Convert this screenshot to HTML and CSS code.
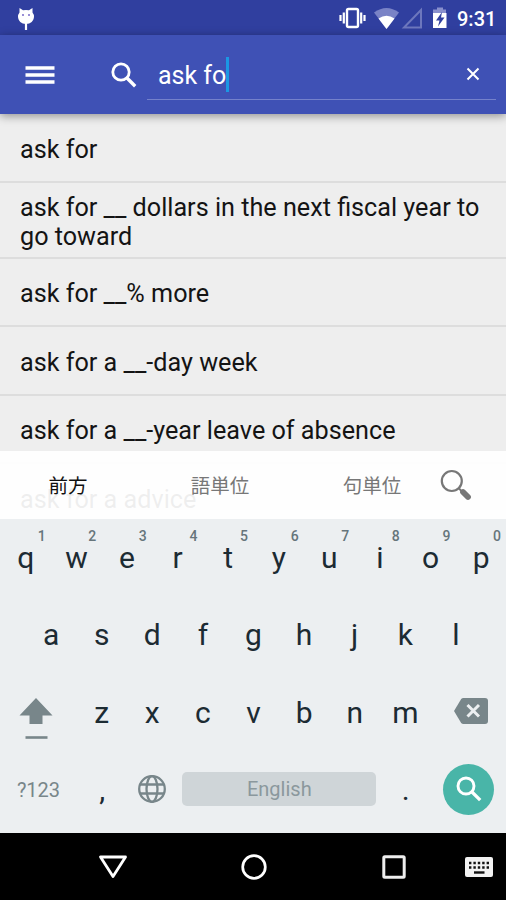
FILE: index.html
```html
<!DOCTYPE html>
<html lang="ja">
<head>
  <meta charset="UTF-8">
  <title>ask for</title>
  <meta name="viewport" content="width=device-width, initial-scale=1.0">
  <link rel="stylesheet" href="styles.css">
</head>
<body>
  <!-- ステータスバー -->
  <div class="status-bar">
    <svg class="notice-icon" width="18" height="24" viewBox="0 0 18 24">
      <path fill="#fff" d="M2.500 1l3.500 2.300q3-.8 6 0L15.500 1v4.500q1.500 2 1.500 4c0 4.500-3.500 7.500-8 7.500s-8-3-8-7.500q0-2 1.500-4z"/>
      <path stroke="#fff" stroke-width="2.200" d="M9 16v7"/>
      <path fill="#9a8fd6" d="M5 7h2v2H5zM11 7h2v2h-2z"/>
    </svg>
    <svg class="system-icons" width="112" height="24" viewBox="0 0 112 24">
      <rect x="10" y="3" width="11" height="18" rx="1.500" fill="none" stroke="#fff" stroke-width="2.400"/>
      <path stroke="#fff" stroke-width="2.200" d="M6.800 6.500v11M24.200 6.500v11"/>
      <path stroke="#fff" stroke-width="2.200" d="M3.500 9v6M27.500 9v6"/>
      <path fill="#7a83c6" d="M37 6.500q12.500-9 25 0L49.500 23z"/>
      <path fill="#fff" d="M41.500 12.500q8-5.500 16 0L49.500 23z"/>
      <path fill="none" stroke="#6d77bd" stroke-width="2" d="M67 21.500h17V4z"/>
      <path fill="#8990cd" d="M100 1.500h6v2h3v4H96v-4h4z"/>
      <path fill="#fff" d="M96 7h13.500v15H96z"/>
      <path fill="#303f9f" d="M105 6l-6 8.500h3.500l-1.500 6 6.500-9H104z"/>
    </svg>
    <span class="clock">9:31</span>
  </div>

  <!-- 検索バー -->
  <div class="app-bar">
    <svg class="menu-icon" width="30" height="20" viewBox="0 0 30 20">
      <path stroke="#fff" stroke-width="3.400" d="M.5 3h29M.5 10h29M.5 17h29"/>
    </svg>
    <svg class="search-icon" width="26" height="26" viewBox="0 0 26 26">
      <circle cx="10" cy="10" r="8.200" fill="none" stroke="#fff" stroke-width="2.800"/>
      <path stroke="#fff" stroke-width="3.400" d="M15.500 15.500l8.700 8.700"/>
    </svg>
    <div class="search-field">
      <span class="query">ask fo</span><span class="cursor"></span>
      <svg class="clear-icon" width="14" height="14" viewBox="0 0 14 14">
        <path stroke="#fff" stroke-width="2" d="M1.500 1.500l11 11M12.500 1.500l-11 11"/>
      </svg>
    </div>
  </div>

  <!-- 検索結果 -->
  <div class="results">
    <div class="result">ask for</div>
    <div class="result two-line">ask for __ dollars in the next fiscal year to go toward</div>
    <div class="result">ask for __% more</div>
    <div class="result">ask for a __-day week</div>
    <div class="result">ask for a __-year leave of absence</div>
    <div class="result">ask for a advice</div>

    <div class="mode-bar">
      <div class="mode active">前方</div>
      <div class="mode">語単位</div>
      <div class="mode">句単位</div>
      <svg class="mode-search" width="32" height="32" viewBox="0 0 32 32">
        <circle cx="11.800" cy="12" r="10" fill="none" stroke="#777" stroke-width="2.200"/>
        <path stroke="#777" stroke-width="2" d="M18.500 19l3 3"/>
        <path stroke="#777" stroke-width="5.800" stroke-linecap="round" d="M23 23l5 5"/>
      </svg>
    </div>
  </div>

  <!-- キーボード -->
  <div class="keyboard">
    <div class="key-row">
      <div class="key">q<span class="hint">1</span></div>
      <div class="key">w<span class="hint">2</span></div>
      <div class="key">e<span class="hint">3</span></div>
      <div class="key">r<span class="hint">4</span></div>
      <div class="key">t<span class="hint">5</span></div>
      <div class="key">y<span class="hint">6</span></div>
      <div class="key">u<span class="hint">7</span></div>
      <div class="key">i<span class="hint">8</span></div>
      <div class="key">o<span class="hint">9</span></div>
      <div class="key">p<span class="hint">0</span></div>
    </div>
    <div class="key-row">
      <div class="key">a</div>
      <div class="key">s</div>
      <div class="key">d</div>
      <div class="key">f</div>
      <div class="key">g</div>
      <div class="key">h</div>
      <div class="key">j</div>
      <div class="key">k</div>
      <div class="key">l</div>
    </div>
    <div class="key-row">
      <div class="key wide shift">
        <svg width="34" height="42" viewBox="0 0 34 42">
          <path fill="#78868a" d="M17 0l16.500 17.500H23.500V26h-13v-8.500H.5z"/>
          <path stroke="#78868a" stroke-width="2.600" d="M6.500 39.500h22"/>
        </svg>
      </div>
      <div class="key">z</div>
      <div class="key">x</div>
      <div class="key">c</div>
      <div class="key">v</div>
      <div class="key">b</div>
      <div class="key">n</div>
      <div class="key">m</div>
      <div class="key wide delete">
        <svg width="34" height="26" viewBox="0 0 34 26">
          <path fill="#78868a" d="M9.500 0H31q3 0 3 3v20q0 3-3 3H9.500q-1.500 0-2.300-1L0 13 7.200 1Q8 0 9.500 0z"/>
          <path stroke="#eceff1" stroke-width="3" d="M13.500 7l11.500 11.500M25 7L13.500 18.500"/>
        </svg>
      </div>
    </div>
    <div class="key-row bottom-row">
      <div class="key wide symbols">?123</div>
      <div class="key mark">,</div>
      <div class="key globe">
        <svg width="28" height="28" viewBox="0 0 28 28" fill="none" stroke="#78868a" stroke-width="2.300">
          <circle cx="14" cy="14" r="12.800"/>
          <ellipse cx="14" cy="14" rx="5.500" ry="12.800"/>
          <path d="M2 9.500h24M2 18.500h24"/>
        </svg>
      </div>
      <div class="space">English</div>
      <div class="key mark">.</div>
      <div class="key wide enter">
        <div class="enter-button">
          <svg width="26" height="26" viewBox="0 0 26 26">
            <circle cx="10" cy="10" r="8" fill="none" stroke="#fff" stroke-width="2.900"/>
            <path stroke="#fff" stroke-width="3.300" d="M15.500 15.500l8.700 8.700"/>
          </svg>
        </div>
      </div>
    </div>
  </div>

  <!-- ナビゲーションバー -->
  <div class="nav-bar">
    <svg width="30" height="26" viewBox="0 0 30 26">
      <path fill="none" stroke="#fff" stroke-width="2.800" stroke-linejoin="round" d="M2.500 3h25L15 22.500z"/>
    </svg>
    <svg width="26" height="26" viewBox="0 0 26 26">
      <circle cx="13" cy="13" r="11.300" fill="none" stroke="#fff" stroke-width="2.700"/>
    </svg>
    <svg class="recent-icon" width="24" height="24" viewBox="0 0 24 24">
      <rect x="1.800" y="1.800" width="20.400" height="20.400" rx="1" fill="none" stroke="#eee" stroke-width="3"/>
    </svg>
    <svg class="ime-icon" width="28" height="20" viewBox="0 0 28 20">
      <rect width="28" height="20" rx="2" fill="#f2f2f2"/>
      <path stroke="#111" stroke-width="2.400" stroke-dasharray="2.400 2" d="M4 6h20.500M4 10.500h20.500"/>
      <path stroke="#111" stroke-width="2.400" d="M9 15.500h10.500"/>
    </svg>
  </div>
</body>
</html>
```
FILE: styles.css
```css
* {
  box-sizing: border-box;
}

body {
  margin: 0;
  width: 506px;
  height: 900px;
  overflow: hidden;
  display: flex;
  flex-direction: column;
  background-color: #eeeeee;
  font-family: Roboto, "Noto Sans CJK JP", sans-serif;
}

svg {
  display: block;
  flex: none;
}

.status-bar {
  height: 35px;
  flex: none;
  display: flex;
  align-items: center;
  padding: 0 10px 0 17px;
  background-color: #303f9f;
  color: white;
}

.notice-icon {
  margin-top: 2px;
}

.system-icons {
  margin-left: auto;
}

.clock {
  width: 39px;
  margin-left: 8px;
  font-size: 20px;
  font-weight: 500;
  padding-top: 3px;
}

.app-bar {
  height: 79px;
  flex: none;
  display: flex;
  align-items: center;
  padding: 0 10px 0 25px;
  background-color: #3f51b5;
  box-shadow: 0 2px 9px rgba(0, 0, 0, 0.4);
  z-index: 1;
}

.search-icon {
  margin-left: 56px;
}

.search-field {
  flex: 1;
  height: 51px;
  margin-left: 10px;
  padding: 0 16px 0 11px;
  display: flex;
  align-items: center;
  border-bottom: 1px solid #7481cb;
}

.query {
  font-size: 25px;
  padding-top: 2px;
  color: white;
}

.cursor {
  width: 3px;
  height: 35px;
  background-color: #1b98e4;
}

.clear-icon {
  margin-left: auto;
}

.results {
  position: relative;
  height: 405px;
  flex: none;
  overflow: hidden;
}

.result {
  height: 68.500px;
  display: flex;
  align-items: center;
  padding: 4px 20px 0;
  border-bottom: 2px solid #dddddd;
  font-size: 25.200px;
  line-height: 29.500px;
  color: #141414;
}

.two-line {
  height: 76px;
  padding-top: 5px;
}

.mode-bar {
  position: absolute;
  left: 0;
  right: 0;
  bottom: 0;
  height: 68px;
  display: flex;
  align-items: center;
  background-color: rgba(255, 255, 255, 0.93);
}

.mode {
  width: 152px;
  padding-bottom: 2px;
  text-align: center;
  font-size: 19.500px;
  color: #777;
}

.mode.active {
  width: 136px;
  margin-right: 8px;
  color: #111;
}

.mode-search {
  margin-left: -8px;
}

.keyboard {
  height: 314px;
  flex: none;
  background-color: #eceff1;
}

.key-row {
  height: 77.300px;
  display: flex;
  justify-content: center;
}

.key {
  position: relative;
  width: 50.600px;
  padding-left: 1px;
  display: flex;
  align-items: center;
  justify-content: center;
  font-size: 30px;
  color: #1c2b33;
}

.hint {
  position: absolute;
  top: 9px;
  right: 5px;
  font-size: 14px;
  font-weight: 500;
  line-height: 16px;
  color: #66757b;
}

.wide {
  width: 75.900px;
}

.shift {
  padding: 13px 4px 0 0;
}

.delete {
  padding: 0 0 3px 5px;
}

.bottom-row {
  align-items: center;
}

.mark {
  padding-left: 2px;
}

.globe {
  padding-bottom: 2px;
}

.symbols {
  font-size: 20px;
  color: #78868a;
}

.space {
  width: 194px;
  height: 34px;
  margin: 0 3.200px 2px 5.200px;
  display: flex;
  align-items: center;
  justify-content: center;
  border-radius: 5px;
  background-color: #cfd5d8;
  font-size: 20px;
  color: #8b989d;
}

.enter {
  padding-bottom: 1px;
}

.enter-button {
  width: 51px;
  height: 51px;
  display: flex;
  align-items: center;
  justify-content: center;
  border-radius: 50%;
  background-color: #49b5a8;
}

.nav-bar {
  height: 67px;
  flex: none;
  display: flex;
  align-items: center;
  gap: 113px;
  padding-left: 98px;
  background-color: black;
}

.recent-icon {
  margin-left: 2px;
}

.ime-icon {
  margin-left: -54px;
}
```
